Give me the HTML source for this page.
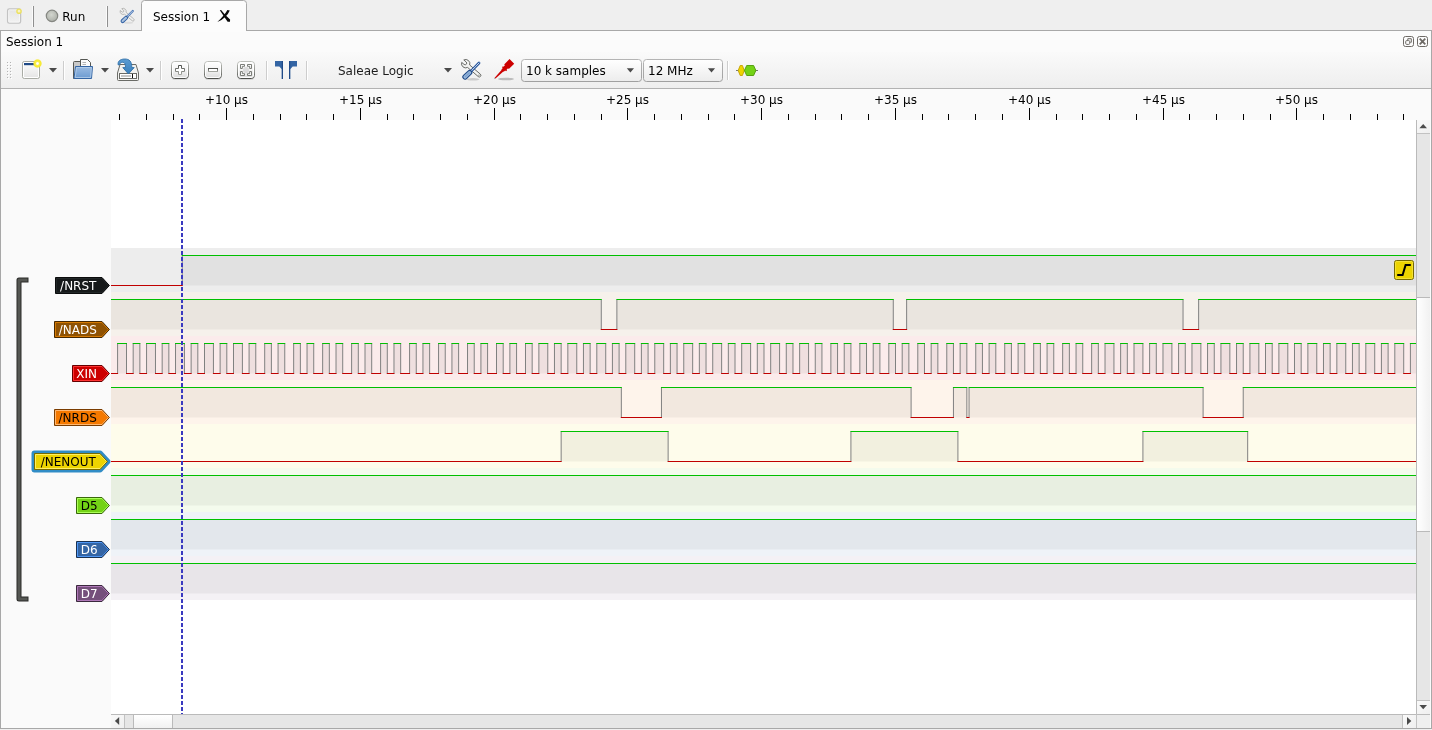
<!DOCTYPE html>
<html>
<head>
<meta charset="utf-8">
<title>Session 1</title>
<style>
html,body{margin:0;padding:0;background:#efefef;overflow:hidden}
body{width:1432px;height:730px;position:relative}
svg{position:absolute;left:0;top:0;display:block;will-change:transform}
text{font-family:"DejaVu Sans","Liberation Sans",sans-serif;font-size:12px}
</style>
</head>
<body>
<svg width="1432" height="730" viewBox="0 0 1432 730">
<defs>
<linearGradient id="tbg" x1="0" y1="0" x2="0" y2="1"><stop offset="0" stop-color="#fafafa"/><stop offset="1" stop-color="#eeeeee"/></linearGradient>
<linearGradient id="btn" x1="0" y1="0" x2="0" y2="1"><stop offset="0" stop-color="#ffffff"/><stop offset="1" stop-color="#ececec"/></linearGradient>
<linearGradient id="hnd" x1="0" y1="0" x2="0" y2="1"><stop offset="0" stop-color="#ffffff"/><stop offset="1" stop-color="#f1f1f1"/></linearGradient>
<linearGradient id="hndv" x1="0" y1="0" x2="1" y2="0"><stop offset="0" stop-color="#ffffff"/><stop offset="1" stop-color="#f1f1f1"/></linearGradient>
<linearGradient id="fold" x1="0" y1="0" x2="0" y2="1"><stop offset="0" stop-color="#9cbce2"/><stop offset="1" stop-color="#6b9ad1"/></linearGradient>
<linearGradient id="winic" x1="0" y1="0" x2="0" y2="1"><stop offset="0" stop-color="#fdfdfd"/><stop offset="1" stop-color="#e6e6e6"/></linearGradient>
<radialGradient id="glow"><stop offset="0" stop-color="#ffffff"/><stop offset="0.18" stop-color="#ffffff"/><stop offset="0.4" stop-color="#fbf04a"/><stop offset="0.75" stop-color="#f6e92f"/><stop offset="1" stop-color="#f6e92f" stop-opacity="0"/></radialGradient>
<radialGradient id="runb" cx="0.45" cy="0.4" r="0.6"><stop offset="0" stop-color="#d3d6cf"/><stop offset="1" stop-color="#acafa8"/></radialGradient>
<g id="tools22">
<ellipse cx="13" cy="20.300" rx="6.500" ry="1.300" fill="#000" fill-opacity="0.160"/>
<g transform="translate(5.700,4.700) rotate(40.600)"><path d="M3.880 -1.600L17.900 -1.600A1.600 1.600 0 0 1 17.900 1.600L3.880 1.600A4.200 4.200 0 0 1 -3.880 1.600L-0.800 1.600A1.600 1.600 0 0 0 -0.800 -1.600L-3.880 -1.600A4.200 4.200 0 0 1 3.880 -1.600Z" fill="#f3f3f1" stroke="#5d5f5b" stroke-width="0.850" stroke-linejoin="round"/><circle cx="17.500" cy="0" r="0.600" fill="#5d5f5b"/></g>
<path d="M10.300 12.900L19 4" stroke="#2c5aa0" stroke-width="2.800" stroke-linecap="round"/>
<path d="M10.800 12.400L19 4" stroke="#e8eef7" stroke-width="0.900" stroke-linecap="round" stroke-dasharray="1.100 0.700"/>
<path d="M5 18L9.600 13.600" stroke="#204a87" stroke-width="5.400" stroke-linecap="round"/>
<path d="M5 18L9.600 13.600" stroke="#9dbce0" stroke-width="3.200" stroke-linecap="round"/>
<path d="M5.200 17.800L9.400 13.800" stroke="#7a9fcd" stroke-width="1.200" stroke-linecap="round"/>
</g>
<g id="tools16">
<ellipse cx="13" cy="20.300" rx="6.500" ry="1.300" fill="#000" fill-opacity="0.080"/>
<g transform="translate(5.700,4.700) rotate(40.600)"><path d="M3.880 -1.600L17.900 -1.600A1.600 1.600 0 0 1 17.900 1.600L3.880 1.600A4.200 4.200 0 0 1 -3.880 1.600L-0.800 1.600A1.600 1.600 0 0 0 -0.800 -1.600L-3.880 -1.600A4.200 4.200 0 0 1 3.880 -1.600Z" fill="#f1f1f1" stroke="#a9aaa7" stroke-width="1" stroke-linejoin="round"/></g>
<path d="M10.300 12.900L19 4" stroke="#4d79b8" stroke-width="3" stroke-linecap="round"/>
<path d="M10.800 12.400L19 4" stroke="#dfe8f4" stroke-width="1" stroke-linecap="round" stroke-dasharray="1.100 0.900"/>
<path d="M5 18L9.600 13.600" stroke="#2f5fa3" stroke-width="5.600" stroke-linecap="round"/>
<path d="M5 18L9.600 13.600" stroke="#a9c1de" stroke-width="3" stroke-linecap="round"/>
</g>
<linearGradient id="sbb" x1="0" y1="0" x2="1" y2="1"><stop offset="0" stop-color="#f9f9f9"/><stop offset="1" stop-color="#efefef"/></linearGradient>
<linearGradient id="sarr" x1="0" y1="0" x2="0" y2="1"><stop offset="0" stop-color="#5a9bd2"/><stop offset="1" stop-color="#3a80bd"/></linearGradient>
<linearGradient id="nsi" x1="0" y1="0" x2="0" y2="1"><stop offset="0" stop-color="#e4e4e4"/><stop offset="1" stop-color="#f2f2f2"/></linearGradient>
<path id="darr2" d="M0 0h7.200l-3.600 4.200z" fill="#4a4a4a"/>
<path id="darr" d="M0 0h8l-4 4.5z" fill="#4a4a4a"/>
</defs>

<!-- ===== window background / tab bar ===== -->
<rect x="0" y="0" width="1432" height="730" fill="#efefef"/>
<!-- frame -->
<rect x="0.5" y="30.5" width="1431" height="698" fill="#fbfbfb" stroke="#a8a8a8"/>
<!-- selected tab -->
<path d="M141.5 31V3.5Q141.5 0.5 144.5 0.5H243.500Q246.500 0.500 246.500 3.500V31" fill="#fcfcfc" stroke="#a8a8a8"/>
<rect x="142" y="30" width="104" height="2" fill="#fcfcfc"/>
<text x="153" y="21">Session 1</text>
<!-- tab close X -->
<path d="M219.800 10.300L221.100 10.100Q225.500 15.800 230.100 19.600L230 21.700L227.600 21.700Q224.200 17 219.800 10.300Z" fill="#0a0a0a"/><path d="M227.400 9.900L229.800 10.500Q228.600 13.600 225.200 17.100Q221.700 20.600 217.300 22.100Q221 18.600 223.500 15.500Q226 12.500 227.400 9.900Z" fill="#0a0a0a"/>

<!-- new session (disabled look) icon in tab bar -->
<rect x="7.600" y="8.800" width="13" height="14.300" rx="1.600" fill="url(#nsi)" stroke="#c3c3c3" stroke-width="1.300"/>
<rect x="8.700" y="9.900" width="10.800" height="12.100" rx="0.800" fill="none" stroke="#f6f6f6" stroke-width="0.900"/>
<circle cx="19" cy="11.200" r="2.100" fill="#f7f3c4" stroke="#ede160" stroke-width="1.400"/>
<!-- separators -->
<path d="M33.500 6V27M107.500 6V27" stroke="#8f8f8f"/>
<path d="M32.500 6V27M106.500 6V27" stroke="#fbfbfb"/>
<!-- Run -->
<circle cx="52" cy="15.900" r="5.700" fill="url(#runb)" stroke="#858782" stroke-width="1.200"/>
<text x="62.300" y="21">Run</text>
<!-- settings (tools) icon -->
<use href="#tools16" transform="translate(119,8) scale(0.727)"/>

<!-- ===== dock title ===== -->
<text x="6" y="46">Session 1</text>
<rect x="1403.500" y="36.500" width="10" height="10" rx="2" fill="none" stroke="#6e6a66"/>
<path d="M1407.800 40.200V38.700H1411.300V42.300H1410.200" fill="none" stroke="#6e6a66" stroke-linejoin="round"/>
<rect x="1405.700" y="40.600" width="4" height="3.800" rx="1" fill="none" stroke="#6e6a66"/>
<rect x="1417.500" y="36.500" width="10" height="10" rx="2" fill="none" stroke="#6e6a66"/>
<path d="M1419.700 38.700L1425.300 44.300M1425.300 38.700L1419.700 44.300" stroke="#6e6a66" stroke-width="1.800"/>

<!-- ===== toolbar ===== -->
<rect x="1" y="52" width="1430" height="36" fill="url(#tbg)"/>
<path d="M1 88.500H1431" stroke="#b2b2b2"/>
<!-- grip -->
<g fill="#b4b4b4"><rect x="7" y="62" width="1" height="1"/><rect x="10" y="62" width="1" height="1"/><rect x="7" y="65" width="1" height="1"/><rect x="10" y="65" width="1" height="1"/><rect x="7" y="68" width="1" height="1"/><rect x="10" y="68" width="1" height="1"/><rect x="7" y="71" width="1" height="1"/><rect x="10" y="71" width="1" height="1"/><rect x="7" y="74" width="1" height="1"/><rect x="10" y="74" width="1" height="1"/><rect x="7" y="77" width="1" height="1"/><rect x="10" y="77" width="1" height="1"/></g>
<g fill="#ffffff"><rect x="8" y="63" width="1" height="1"/><rect x="11" y="63" width="1" height="1"/><rect x="8" y="66" width="1" height="1"/><rect x="11" y="66" width="1" height="1"/><rect x="8" y="69" width="1" height="1"/><rect x="11" y="69" width="1" height="1"/><rect x="8" y="72" width="1" height="1"/><rect x="11" y="72" width="1" height="1"/><rect x="8" y="75" width="1" height="1"/><rect x="11" y="75" width="1" height="1"/><rect x="8" y="78" width="1" height="1"/><rect x="11" y="78" width="1" height="1"/></g>
<!-- new view icon -->
<rect x="22.500" y="61.500" width="17" height="17" rx="1.800" fill="#ffffff" stroke="#a9aca5"/>
<rect x="24" y="63" width="14" height="14" fill="url(#winic)"/>
<rect x="24" y="63" width="11" height="2.200" fill="#204a87"/>
<circle cx="37.500" cy="63.500" r="4.700" fill="url(#glow)"/>
<use href="#darr" x="49" y="68"/>
<!-- separators -->
<path d="M63.500 61V80M160.500 61V80M266.500 61V80M306.500 61V80M727.500 61V80" stroke="#cdcdcd"/>
<path d="M64.500 61V80M161.500 61V80M267.500 61V80M307.500 61V80M728.500 61V80" stroke="#ffffff"/>
<!-- open icon -->
<path d="M73.500 78.500V62.500Q73.500 61.500 74.500 61.500H80.500V78.500z" fill="#c9c9c9" stroke="#555753"/>
<path d="M80.500 67V59.500H87.500L90.500 62.500V67z" fill="#fbfbfb" stroke="#555753"/>
<path d="M82.500 62.500H86M82.500 64.500H86" stroke="#b5b5b5"/>
<path d="M75.500 66.500H92.500L91.500 78.500H74z" fill="url(#fold)" stroke="#3465a4"/>
<path d="M76.500 67.500H91.400L90.600 77.500H75.200z" fill="none" stroke="#b7cfea" stroke-opacity="0.800"/>
<use href="#darr" x="101" y="68"/>
<!-- save icon -->
<path d="M120 64.500H136L138.500 73V79.500Q138.500 80.500 137.500 80.500H118.500Q117.500 80.500 117.500 79.500V73z" fill="#f2f2f0" stroke="#6a6b66"/>
<rect x="119.500" y="73.500" width="17" height="5" fill="#ffffff" stroke="#6a6b66"/>
<rect x="121" y="75" width="10" height="2" fill="#c6c6c6"/>
<path d="M132.500 74V78" stroke="#111"/>
<path d="M118.200 64.900C117.500 61.500 119.800 59.200 124.500 59C129.600 58.900 131.800 61.600 131.800 67.600H134.200L128.400 73.900L122.800 67.600H125.500C125.600 64 124.500 62.300 122.600 62.300C120.900 62.300 119.800 63.300 119.400 64.900Z" fill="url(#sarr)" stroke="#2f6fa8" stroke-width="0.900" stroke-linejoin="round"/>
<use href="#darr" x="146" y="68"/>
<!-- zoom in / out / fit -->
<linearGradient id="zb" x1="0" y1="0" x2="0" y2="1"><stop offset="0" stop-color="#bcbeb9"/><stop offset="0.6" stop-color="#8c8e89"/><stop offset="1" stop-color="#4c4e4a"/></linearGradient><linearGradient id="zf" x1="0" y1="0" x2="0" y2="1"><stop offset="0" stop-color="#ffffff"/><stop offset="0.5" stop-color="#f4f4f4"/><stop offset="1" stop-color="#d9d9d9"/></linearGradient>
<linearGradient id="zi" x1="0" y1="0" x2="0" y2="1"><stop offset="0" stop-color="#50524e"/><stop offset="1" stop-color="#a3a59f"/></linearGradient>
<g id="zbtn"><rect x="172.500" y="77.500" width="15" height="2.500" rx="1.200" fill="#000" fill-opacity="0.100"/><rect x="171.500" y="61.500" width="17" height="17" rx="3.200" fill="url(#zf)" stroke="url(#zb)"/><rect x="172.500" y="62.500" width="15" height="15" rx="2.400" fill="none" stroke="#ffffff" stroke-opacity="0.900"/></g>
<use href="#zbtn" x="33"/><use href="#zbtn" x="66"/>
<path d="M178.500 65.500h3v3h3v3h-3v3h-3v-3h-3v-3h3z" fill="#ffffff" stroke="url(#zi)"/>
<rect x="208.500" y="68.500" width="9" height="3" fill="#ffffff" stroke="url(#zi)"/>
<circle cx="246" cy="70" r="3" fill="#d0d0d0" fill-opacity="0.700"/>
<g fill="#ffffff" stroke="#6d6f6a" stroke-width="0.900"><path d="M240.500 68.500v-4h4v1.800h-2.200v2.200z"/><path d="M251.500 68.500v-4h-4v1.800h2.200v2.200z"/><path d="M240.500 71.500v4h4v-1.800h-2.200v-2.200z"/><path d="M251.500 71.500v4h-4v-1.800h2.200v-2.200z"/></g>
<!-- cursors -->
<path d="M275 61H283V79H281.800V69.200L279.300 66.600H275z" fill="#3465a4"/><path d="M282.400 61V79" stroke="#204a87" stroke-width="1.200"/>
<path d="M297 61H289V79H290.200V69.200L292.700 66.600H297z" fill="#3465a4"/><path d="M289.600 61V79" stroke="#204a87" stroke-width="1.200"/>
<!-- device -->
<text x="338" y="75" fill="#1c1c1c">Saleae Logic</text>
<use href="#darr" x="444" y="68"/>
<!-- tools 22px -->
<use href="#tools22" transform="translate(460,59)"/>
<!-- probe -->
<ellipse cx="506" cy="79" rx="8" ry="1.300" fill="#000" fill-opacity="0.220"/>
<path d="M493.830 79.370L495.600 78.310L494.890 77.600z" fill="#8a8a8a"/>
<path d="M495.500 78.480L503.340 71.480L503.730 71.870L505.220 70.390L506.070 71.230L507.060 70.240L506.560 69.750L508.050 68.260L508.820 69.040L514.200 63.670L509.530 59L504.160 64.380L504.940 65.150L503.450 66.640L502.960 66.140L501.970 67.130L502.810 67.980L501.330 69.470L501.720 69.860L494.720 77.700z" fill="#cc0000"/>
<!-- combos -->
<linearGradient id="cbs" x1="0" y1="0" x2="0" y2="1"><stop offset="0" stop-color="#b4b4b4"/><stop offset="1" stop-color="#a0a0a0"/></linearGradient>
<rect x="521.500" y="59.500" width="120" height="22" rx="3" fill="url(#btn)" stroke="url(#cbs)"/>
<text x="526" y="75">10 k samples</text>
<use href="#darr2" x="626.800" y="68.300"/>
<rect x="643.500" y="59.500" width="79" height="22" rx="3" fill="url(#btn)" stroke="url(#cbs)"/>
<text x="648" y="75">12 MHz</text>
<use href="#darr2" x="707.900" y="68.300"/>
<!-- decoder icon -->
<path d="M736 70.500H758" stroke="#777" stroke-width="1"/>
<path d="M738.200 70.500L740.200 65.500H742.400L744.300 70.500L742.400 75.500H740.200z" fill="#edd400" stroke="#c4a000" stroke-width="0.900"/>
<path d="M744.400 70.500L746.700 65.500H753.600L755.900 70.500L753.600 75.500H746.700z" fill="#73d216" stroke="#4e9a06" stroke-width="0.900"/>


<!-- ===== ruler / header / view ===== -->
<rect x="1" y="89" width="1430" height="31" fill="#fafafa"/>
<rect x="1" y="120" width="110" height="608" fill="#fafafa"/>
<rect x="111" y="120" width="1305" height="594" fill="#ffffff"/>
<path d="M226.5 108V120M360.5 108V120M494.5 108V120M627.5 108V120M761.5 108V120M895.5 108V120M1029.5 108V120M1163.5 108V120M1296.5 108V120M119.5 114V120M146.5 114V120M173.5 114V120M199.5 114V120M253.5 114V120M280.5 114V120M306.5 114V120M333.5 114V120M387.5 114V120M413.5 114V120M440.5 114V120M467.5 114V120M520.5 114V120M547.5 114V120M574.5 114V120M601.5 114V120M654.5 114V120M681.5 114V120M708.5 114V120M734.5 114V120M788.5 114V120M815.5 114V120M841.5 114V120M868.5 114V120M922.5 114V120M948.5 114V120M975.5 114V120M1002.5 114V120M1056.5 114V120M1082.5 114V120M1109.5 114V120M1136.5 114V120M1189.5 114V120M1216.5 114V120M1243.5 114V120M1270.5 114V120M1323.5 114V120M1350.5 114V120M1377.5 114V120M1403.5 114V120" stroke="#000" fill="none" shape-rendering="crispEdges"/>
<text x="226.5" y="104" text-anchor="middle">+10 µs</text>
<text x="360.5" y="104" text-anchor="middle">+15 µs</text>
<text x="494.5" y="104" text-anchor="middle">+20 µs</text>
<text x="627.5" y="104" text-anchor="middle">+25 µs</text>
<text x="761.5" y="104" text-anchor="middle">+30 µs</text>
<text x="895.5" y="104" text-anchor="middle">+35 µs</text>
<text x="1029.5" y="104" text-anchor="middle">+40 µs</text>
<text x="1163.5" y="104" text-anchor="middle">+45 µs</text>
<text x="1296.5" y="104" text-anchor="middle">+50 µs</text>
<clipPath id="vw"><rect x="111" y="120" width="1305" height="594"/></clipPath>
<g clip-path="url(#vw)">
<rect x="111" y="248" width="1305" height="44" fill="#ededed"/>
<rect x="111" y="292" width="1305" height="44" fill="#f6f1eb"/>
<rect x="111" y="336" width="1305" height="44" fill="#fbebeb"/>
<rect x="111" y="380" width="1305" height="44" fill="#fef4eb"/>
<rect x="111" y="424" width="1305" height="44" fill="#fefceb"/>
<rect x="111" y="468" width="1305" height="44" fill="#f4fbed"/>
<rect x="111" y="512" width="1305" height="44" fill="#eff3f8"/>
<rect x="111" y="556" width="1305" height="44" fill="#f4f1f5"/>
<path d="M182.22 255.5H1416V285.5H182.22z" fill="#000" fill-opacity="0.047"/>
<path d="M182.22 255.5V285.5" stroke="#808080" fill="none"/>
<path d="M182.22 255.5H1416" stroke="#00c000" fill="none" stroke-linecap="square"/>
<path d="M111 285.5H182.22" stroke="#c00000" fill="none" stroke-linecap="square"/>
<path d="M111 299.5H601.27V329.5H111zM616.88 299.5H893.27V329.5H616.88zM906.64 299.5H1183.04V329.5H906.64zM1198.64 299.5H1416V329.5H1198.64z" fill="#000" fill-opacity="0.047"/>
<path d="M601.27 299.5V329.5M616.88 299.5V329.5M893.27 299.5V329.5M906.64 299.5V329.5M1183.04 299.5V329.5M1198.64 299.5V329.5" stroke="#808080" fill="none"/>
<path d="M111 299.5H601.27M616.88 299.5H893.27M906.64 299.5H1183.04M1198.64 299.5H1416" stroke="#00c000" fill="none" stroke-linecap="square"/>
<path d="M601.27 329.5H616.88M893.27 329.5H906.64M1183.04 329.5H1198.64" stroke="#c00000" fill="none" stroke-linecap="square"/>
<path d="M117.58 343.5H126.5V373.5H117.58zM133.18 343.5H139.87V373.5H133.18zM146.56 343.5H155.47V373.5H146.56zM162.16 343.5H168.85V373.5H162.16zM175.53 343.5H184.45V373.5H175.53zM191.14 343.5H197.82V373.5H191.14zM204.51 343.5H213.43V373.5H204.51zM220.11 343.5H226.8V373.5H220.11zM233.49 343.5H242.4V373.5H233.49zM249.09 343.5H255.78V373.5H249.09zM264.69 343.5H271.38V373.5H264.69zM278.07 343.5H284.75V373.5H278.07zM293.67 343.5H300.36V373.5H293.67zM307.04 343.5H313.73V373.5H307.04zM322.65 343.5H329.33V373.5H322.65zM336.02 343.5H342.71V373.5H336.02zM351.62 343.5H358.31V373.5H351.62zM365 343.5H371.69V373.5H365zM380.6 343.5H387.29V373.5H380.6zM393.98 343.5H400.66V373.5H393.98zM409.58 343.5H416.26V373.5H409.58zM422.95 343.5H429.64V373.5H422.95zM438.56 343.5H445.24V373.5H438.56zM451.93 343.5H458.62V373.5H451.93zM467.53 343.5H474.22V373.5H467.53zM480.91 343.5H487.59V373.5H480.91zM496.51 343.5H503.2V373.5H496.51zM509.88 343.5H516.57V373.5H509.88zM525.49 343.5H532.17V373.5H525.49zM538.86 343.5H547.78V373.5H538.86zM554.46 343.5H561.15V373.5H554.46zM567.84 343.5H576.75V373.5H567.84zM583.44 343.5H590.13V373.5H583.44zM596.81 343.5H605.73V373.5H596.81zM612.42 343.5H619.1V373.5H612.42zM625.79 343.5H634.71V373.5H625.79zM641.39 343.5H648.08V373.5H641.39zM654.77 343.5H663.68V373.5H654.77zM670.37 343.5H677.06V373.5H670.37zM683.75 343.5H692.66V373.5H683.75zM699.35 343.5H706.04V373.5H699.35zM712.72 343.5H721.64V373.5H712.72zM728.33 343.5H735.01V373.5H728.33zM741.7 343.5H750.62V373.5H741.7zM757.3 343.5H763.99V373.5H757.3zM770.68 343.5H779.59V373.5H770.68zM786.28 343.5H792.97V373.5H786.28zM799.65 343.5H808.57V373.5H799.65zM815.26 343.5H821.94V373.5H815.26zM830.86 343.5H837.55V373.5H830.86zM844.23 343.5H850.92V373.5H844.23zM859.84 343.5H866.52V373.5H859.84zM873.21 343.5H879.9V373.5H873.21zM888.81 343.5H895.5V373.5H888.81zM902.19 343.5H908.87V373.5H902.19zM917.79 343.5H924.48V373.5H917.79zM931.16 343.5H937.85V373.5H931.16zM946.77 343.5H953.45V373.5H946.77zM960.14 343.5H966.83V373.5H960.14zM975.74 343.5H982.43V373.5H975.74zM989.12 343.5H995.81V373.5H989.12zM1004.72 343.5H1011.41V373.5H1004.72zM1018.1 343.5H1024.78V373.5H1018.1zM1033.7 343.5H1040.38V373.5H1033.7zM1047.07 343.5H1053.76V373.5H1047.07zM1062.67 343.5H1069.36V373.5H1062.67zM1076.05 343.5H1082.74V373.5H1076.05zM1091.65 343.5H1098.34V373.5H1091.65zM1105.03 343.5H1113.94V373.5H1105.03zM1120.63 343.5H1127.32V373.5H1120.63zM1134 343.5H1142.92V373.5H1134zM1149.61 343.5H1156.29V373.5H1149.61zM1162.98 343.5H1171.9V373.5H1162.98zM1178.58 343.5H1185.27V373.5H1178.58zM1191.96 343.5H1200.87V373.5H1191.96zM1207.56 343.5H1214.25V373.5H1207.56zM1220.93 343.5H1229.85V373.5H1220.93zM1236.54 343.5H1243.22V373.5H1236.54zM1249.91 343.5H1258.83V373.5H1249.91zM1265.51 343.5H1272.2V373.5H1265.51zM1278.89 343.5H1287.8V373.5H1278.89zM1294.49 343.5H1301.18V373.5H1294.49zM1307.87 343.5H1316.78V373.5H1307.87zM1323.47 343.5H1330.15V373.5H1323.47zM1336.84 343.5H1345.76V373.5H1336.84zM1352.44 343.5H1359.13V373.5H1352.44zM1365.82 343.5H1374.73V373.5H1365.82zM1381.42 343.5H1388.11V373.5H1381.42zM1394.8 343.5H1403.71V373.5H1394.8zM1410.4 343.5H1416V373.5H1410.4z" fill="#000" fill-opacity="0.047"/>
<path d="M117.58 343.5V373.5M126.5 343.5V373.5M133.18 343.5V373.5M139.87 343.5V373.5M146.56 343.5V373.5M155.47 343.5V373.5M162.16 343.5V373.5M168.85 343.5V373.5M175.53 343.5V373.5M184.45 343.5V373.5M191.14 343.5V373.5M197.82 343.5V373.5M204.51 343.5V373.5M213.43 343.5V373.5M220.11 343.5V373.5M226.8 343.5V373.5M233.49 343.5V373.5M242.4 343.5V373.5M249.09 343.5V373.5M255.78 343.5V373.5M264.69 343.5V373.5M271.38 343.5V373.5M278.07 343.5V373.5M284.75 343.5V373.5M293.67 343.5V373.5M300.36 343.5V373.5M307.04 343.5V373.5M313.73 343.5V373.5M322.65 343.5V373.5M329.33 343.5V373.5M336.02 343.5V373.5M342.71 343.5V373.5M351.62 343.5V373.5M358.31 343.5V373.5M365 343.5V373.5M371.69 343.5V373.5M380.6 343.5V373.5M387.29 343.5V373.5M393.98 343.5V373.5M400.66 343.5V373.5M409.58 343.5V373.5M416.26 343.5V373.5M422.95 343.5V373.5M429.64 343.5V373.5M438.56 343.5V373.5M445.24 343.5V373.5M451.93 343.5V373.5M458.62 343.5V373.5M467.53 343.5V373.5M474.22 343.5V373.5M480.91 343.5V373.5M487.59 343.5V373.5M496.51 343.5V373.5M503.2 343.5V373.5M509.88 343.5V373.5M516.57 343.5V373.5M525.49 343.5V373.5M532.17 343.5V373.5M538.86 343.5V373.5M547.78 343.5V373.5M554.46 343.5V373.5M561.15 343.5V373.5M567.84 343.5V373.5M576.75 343.5V373.5M583.44 343.5V373.5M590.13 343.5V373.5M596.81 343.5V373.5M605.73 343.5V373.5M612.42 343.5V373.5M619.1 343.5V373.5M625.79 343.5V373.5M634.71 343.5V373.5M641.39 343.5V373.5M648.08 343.5V373.5M654.77 343.5V373.5M663.68 343.5V373.5M670.37 343.5V373.5M677.06 343.5V373.5M683.75 343.5V373.5M692.66 343.5V373.5M699.35 343.5V373.5M706.04 343.5V373.5M712.72 343.5V373.5M721.64 343.5V373.5M728.33 343.5V373.5M735.01 343.5V373.5M741.7 343.5V373.5M750.62 343.5V373.5M757.3 343.5V373.5M763.99 343.5V373.5M770.68 343.5V373.5M779.59 343.5V373.5M786.28 343.5V373.5M792.97 343.5V373.5M799.65 343.5V373.5M808.57 343.5V373.5M815.26 343.5V373.5M821.94 343.5V373.5M830.86 343.5V373.5M837.55 343.5V373.5M844.23 343.5V373.5M850.92 343.5V373.5M859.84 343.5V373.5M866.52 343.5V373.5M873.21 343.5V373.5M879.9 343.5V373.5M888.81 343.5V373.5M895.5 343.5V373.5M902.19 343.5V373.5M908.87 343.5V373.5M917.79 343.5V373.5M924.48 343.5V373.5M931.16 343.5V373.5M937.85 343.5V373.5M946.77 343.5V373.5M953.45 343.5V373.5M960.14 343.5V373.5M966.83 343.5V373.5M975.74 343.5V373.5M982.43 343.5V373.5M989.12 343.5V373.5M995.81 343.5V373.5M1004.72 343.5V373.5M1011.41 343.5V373.5M1018.1 343.5V373.5M1024.78 343.5V373.5M1033.7 343.5V373.5M1040.38 343.5V373.5M1047.07 343.5V373.5M1053.76 343.5V373.5M1062.67 343.5V373.5M1069.36 343.5V373.5M1076.05 343.5V373.5M1082.74 343.5V373.5M1091.65 343.5V373.5M1098.34 343.5V373.5M1105.03 343.5V373.5M1113.94 343.5V373.5M1120.63 343.5V373.5M1127.32 343.5V373.5M1134 343.5V373.5M1142.92 343.5V373.5M1149.61 343.5V373.5M1156.29 343.5V373.5M1162.98 343.5V373.5M1171.9 343.5V373.5M1178.58 343.5V373.5M1185.27 343.5V373.5M1191.96 343.5V373.5M1200.87 343.5V373.5M1207.56 343.5V373.5M1214.25 343.5V373.5M1220.93 343.5V373.5M1229.85 343.5V373.5M1236.54 343.5V373.5M1243.22 343.5V373.5M1249.91 343.5V373.5M1258.83 343.5V373.5M1265.51 343.5V373.5M1272.2 343.5V373.5M1278.89 343.5V373.5M1287.8 343.5V373.5M1294.49 343.5V373.5M1301.18 343.5V373.5M1307.87 343.5V373.5M1316.78 343.5V373.5M1323.47 343.5V373.5M1330.15 343.5V373.5M1336.84 343.5V373.5M1345.76 343.5V373.5M1352.44 343.5V373.5M1359.13 343.5V373.5M1365.82 343.5V373.5M1374.73 343.5V373.5M1381.42 343.5V373.5M1388.11 343.5V373.5M1394.8 343.5V373.5M1403.71 343.5V373.5M1410.4 343.5V373.5" stroke="#808080" fill="none"/>
<path d="M117.58 343.5H126.5M133.18 343.5H139.87M146.56 343.5H155.47M162.16 343.5H168.85M175.53 343.5H184.45M191.14 343.5H197.82M204.51 343.5H213.43M220.11 343.5H226.8M233.49 343.5H242.4M249.09 343.5H255.78M264.69 343.5H271.38M278.07 343.5H284.75M293.67 343.5H300.36M307.04 343.5H313.73M322.65 343.5H329.33M336.02 343.5H342.71M351.62 343.5H358.31M365 343.5H371.69M380.6 343.5H387.29M393.98 343.5H400.66M409.58 343.5H416.26M422.95 343.5H429.64M438.56 343.5H445.24M451.93 343.5H458.62M467.53 343.5H474.22M480.91 343.5H487.59M496.51 343.5H503.2M509.88 343.5H516.57M525.49 343.5H532.17M538.86 343.5H547.78M554.46 343.5H561.15M567.84 343.5H576.75M583.44 343.5H590.13M596.81 343.5H605.73M612.42 343.5H619.1M625.79 343.5H634.71M641.39 343.5H648.08M654.77 343.5H663.68M670.37 343.5H677.06M683.75 343.5H692.66M699.35 343.5H706.04M712.72 343.5H721.64M728.33 343.5H735.01M741.7 343.5H750.62M757.3 343.5H763.99M770.68 343.5H779.59M786.28 343.5H792.97M799.65 343.5H808.57M815.26 343.5H821.94M830.86 343.5H837.55M844.23 343.5H850.92M859.84 343.5H866.52M873.21 343.5H879.9M888.81 343.5H895.5M902.19 343.5H908.87M917.79 343.5H924.48M931.16 343.5H937.85M946.77 343.5H953.45M960.14 343.5H966.83M975.74 343.5H982.43M989.12 343.5H995.81M1004.72 343.5H1011.41M1018.1 343.5H1024.78M1033.7 343.5H1040.38M1047.07 343.5H1053.76M1062.67 343.5H1069.36M1076.05 343.5H1082.74M1091.65 343.5H1098.34M1105.03 343.5H1113.94M1120.63 343.5H1127.32M1134 343.5H1142.92M1149.61 343.5H1156.29M1162.98 343.5H1171.9M1178.58 343.5H1185.27M1191.96 343.5H1200.87M1207.56 343.5H1214.25M1220.93 343.5H1229.85M1236.54 343.5H1243.22M1249.91 343.5H1258.83M1265.51 343.5H1272.2M1278.89 343.5H1287.8M1294.49 343.5H1301.18M1307.87 343.5H1316.78M1323.47 343.5H1330.15M1336.84 343.5H1345.76M1352.44 343.5H1359.13M1365.82 343.5H1374.73M1381.42 343.5H1388.11M1394.8 343.5H1403.71M1410.4 343.5H1416" stroke="#00c000" fill="none" stroke-linecap="square"/>
<path d="M111 373.5H117.58M126.5 373.5H133.18M139.87 373.5H146.56M155.47 373.5H162.16M168.85 373.5H175.53M184.45 373.5H191.14M197.82 373.5H204.51M213.43 373.5H220.11M226.8 373.5H233.49M242.4 373.5H249.09M255.78 373.5H264.69M271.38 373.5H278.07M284.75 373.5H293.67M300.36 373.5H307.04M313.73 373.5H322.65M329.33 373.5H336.02M342.71 373.5H351.62M358.31 373.5H365M371.69 373.5H380.6M387.29 373.5H393.98M400.66 373.5H409.58M416.26 373.5H422.95M429.64 373.5H438.56M445.24 373.5H451.93M458.62 373.5H467.53M474.22 373.5H480.91M487.59 373.5H496.51M503.2 373.5H509.88M516.57 373.5H525.49M532.17 373.5H538.86M547.78 373.5H554.46M561.15 373.5H567.84M576.75 373.5H583.44M590.13 373.5H596.81M605.73 373.5H612.42M619.1 373.5H625.79M634.71 373.5H641.39M648.08 373.5H654.77M663.68 373.5H670.37M677.06 373.5H683.75M692.66 373.5H699.35M706.04 373.5H712.72M721.64 373.5H728.33M735.01 373.5H741.7M750.62 373.5H757.3M763.99 373.5H770.68M779.59 373.5H786.28M792.97 373.5H799.65M808.57 373.5H815.26M821.94 373.5H830.86M837.55 373.5H844.23M850.92 373.5H859.84M866.52 373.5H873.21M879.9 373.5H888.81M895.5 373.5H902.19M908.87 373.5H917.79M924.48 373.5H931.16M937.85 373.5H946.77M953.45 373.5H960.14M966.83 373.5H975.74M982.43 373.5H989.12M995.81 373.5H1004.72M1011.41 373.5H1018.1M1024.78 373.5H1033.7M1040.38 373.5H1047.07M1053.76 373.5H1062.67M1069.36 373.5H1076.05M1082.74 373.5H1091.65M1098.34 373.5H1105.03M1113.94 373.5H1120.63M1127.32 373.5H1134M1142.92 373.5H1149.61M1156.29 373.5H1162.98M1171.9 373.5H1178.58M1185.27 373.5H1191.96M1200.87 373.5H1207.56M1214.25 373.5H1220.93M1229.85 373.5H1236.54M1243.22 373.5H1249.91M1258.83 373.5H1265.51M1272.2 373.5H1278.89M1287.8 373.5H1294.49M1301.18 373.5H1307.87M1316.78 373.5H1323.47M1330.15 373.5H1336.84M1345.76 373.5H1352.44M1359.13 373.5H1365.82M1374.73 373.5H1381.42M1388.11 373.5H1394.8M1403.71 373.5H1410.4" stroke="#c00000" fill="none" stroke-linecap="square"/>
<path d="M111 387.5H621.33V417.5H111zM661.46 387.5H911.1V417.5H661.46zM953.45 387.5H966.83V417.5H953.45zM969.06 387.5H1203.1V417.5H969.06zM1243.22 387.5H1416V417.5H1243.22z" fill="#000" fill-opacity="0.047"/>
<path d="M621.33 387.5V417.5M661.46 387.5V417.5M911.1 387.5V417.5M953.45 387.5V417.5M966.83 387.5V417.5M969.06 387.5V417.5M1203.1 387.5V417.5M1243.22 387.5V417.5" stroke="#808080" fill="none"/>
<path d="M111 387.5H621.33M661.46 387.5H911.1M953.45 387.5H966.83M969.06 387.5H1203.1M1243.22 387.5H1416" stroke="#00c000" fill="none" stroke-linecap="square"/>
<path d="M621.33 417.5H661.46M911.1 417.5H953.45M966.83 417.5H969.06M1203.1 417.5H1243.22" stroke="#c00000" fill="none" stroke-linecap="square"/>
<path d="M561.15 431.5H668.14V461.5H561.15zM850.92 431.5H957.91V461.5H850.92zM1142.92 431.5H1247.68V461.5H1142.92z" fill="#000" fill-opacity="0.047"/>
<path d="M561.15 431.5V461.5M668.14 431.5V461.5M850.92 431.5V461.5M957.91 431.5V461.5M1142.92 431.5V461.5M1247.68 431.5V461.5" stroke="#808080" fill="none"/>
<path d="M561.15 431.5H668.14M850.92 431.5H957.91M1142.92 431.5H1247.68" stroke="#00c000" fill="none" stroke-linecap="square"/>
<path d="M111 461.5H561.15M668.14 461.5H850.92M957.91 461.5H1142.92M1247.68 461.5H1416" stroke="#c00000" fill="none" stroke-linecap="square"/>
<path d="M111 475.5H1416V505.5H111z" fill="#000" fill-opacity="0.047"/>
<path d="M111 475.5H1416" stroke="#00c000" fill="none" stroke-linecap="square"/>
<path d="M111 519.5H1416V549.5H111z" fill="#000" fill-opacity="0.047"/>
<path d="M111 519.5H1416" stroke="#00c000" fill="none" stroke-linecap="square"/>
<path d="M111 563.5H1416V593.5H111z" fill="#000" fill-opacity="0.047"/>
<path d="M111 563.5H1416" stroke="#00c000" fill="none" stroke-linecap="square"/>
</g>
<path d="M182 119V714" stroke="#3a3ac0" stroke-width="2" stroke-dasharray="4 2" fill="none"/>
<rect x="1394.500" y="260.500" width="19" height="19" rx="2" fill="#edd400" stroke="#766a00"/>
<rect x="1395.500" y="261.500" width="17" height="17" rx="1.200" fill="none" stroke="#f7e84a" stroke-opacity="0.700"/>
<path d="M1397.200 275H1402.600L1405.600 265H1410.800" fill="none" stroke="#000" stroke-width="2" stroke-linejoin="miter"/>
<polygon points="55.5,277.5 102,277.5 109.4,285.5 102,293.5 55.5,293.5" fill="#16191a"/>
<polygon points="56.5,278.5 102,278.5 108.4,285.5 102,292.5 56.5,292.5" fill="none" stroke="#212627"/>
<polygon points="55.5,277.5 102,277.5 109.4,285.5 102,293.5 55.5,293.5" fill="none" stroke="#0b0c0d"/>
<text x="78.25" y="289.9" text-anchor="middle" fill="#fff">/NRST</text>
<polygon points="54.5,321.5 102,321.5 109.4,329.5 102,337.5 54.5,337.5" fill="#8f5202"/>
<polygon points="55.5,322.5 102,322.5 108.4,329.5 102,336.5 55.5,336.5" fill="none" stroke="#d67b03"/>
<polygon points="54.5,321.5 102,321.5 109.4,329.5 102,337.5 54.5,337.5" fill="none" stroke="#472901"/>
<text x="77.85" y="333.9" text-anchor="middle" fill="#fff">/NADS</text>
<polygon points="72.5,365.5 102,365.5 109.4,373.5 102,381.5 72.5,381.5" fill="#cc0000"/>
<polygon points="73.5,366.5 102,366.5 108.4,373.5 102,380.5 73.5,380.5" fill="none" stroke="#ff3333"/>
<polygon points="72.5,365.5 102,365.5 109.4,373.5 102,381.5 72.5,381.5" fill="none" stroke="#660000"/>
<text x="86.65" y="377.9" text-anchor="middle" fill="#fff">XIN</text>
<polygon points="54.5,409.5 102,409.5 109.4,417.5 102,425.5 54.5,425.5" fill="#f57900"/>
<polygon points="55.5,410.5 102,410.5 108.4,417.5 102,424.5 55.5,424.5" fill="none" stroke="#ffb770"/>
<polygon points="54.5,409.5 102,409.5 109.4,417.5 102,425.5 54.5,425.5" fill="none" stroke="#7a3c00"/>
<text x="77.65" y="421.9" text-anchor="middle" fill="#000">/NRDS</text>
<polygon points="34.5,453.5 100,453.5 107.4,461.5 100,469.5 34.5,469.5" fill="none" stroke="#308cc6" stroke-width="6" stroke-linejoin="round"/>
<polygon points="34.5,453.5 100,453.5 107.4,461.5 100,469.5 34.5,469.5" fill="#edd400"/>
<polygon points="35.5,454.5 100,454.5 106.4,461.5 100,468.5 35.5,468.5" fill="none" stroke="#ffef64"/>
<polygon points="34.5,453.5 100,453.5 107.4,461.5 100,469.5 34.5,469.5" fill="none" stroke="#766a00"/>
<text x="68.35" y="465.9" text-anchor="middle" fill="#000">/NENOUT</text>
<polygon points="76.5,497.5 102,497.5 109.4,505.5 102,513.5 76.5,513.5" fill="#73d216"/>
<polygon points="77.5,498.5 102,498.5 108.4,505.5 102,512.5 77.5,512.5" fill="none" stroke="#aaff57"/>
<polygon points="76.5,497.5 102,497.5 109.4,505.5 102,513.5 76.5,513.5" fill="none" stroke="#39690b"/>
<text x="89.25" y="509.9" text-anchor="middle" fill="#000">D5</text>
<polygon points="76.5,541.5 102,541.5 109.4,549.5 102,557.5 76.5,557.5" fill="#3465a4"/>
<polygon points="77.5,542.5 102,542.5 108.4,549.5 102,556.5 77.5,556.5" fill="none" stroke="#4e97f6"/>
<polygon points="76.5,541.5 102,541.5 109.4,549.5 102,557.5 76.5,557.5" fill="none" stroke="#1a3252"/>
<text x="89.25" y="553.9" text-anchor="middle" fill="#fff">D6</text>
<polygon points="76.5,585.5 102,585.5 109.4,593.5 102,601.5 76.5,601.5" fill="#75507b"/>
<polygon points="77.5,586.5 102,586.5 108.4,593.5 102,600.5 77.5,600.5" fill="none" stroke="#af78b8"/>
<polygon points="76.5,585.5 102,585.5 109.4,593.5 102,601.5 76.5,601.5" fill="none" stroke="#3a283d"/>
<text x="89.25" y="597.9" text-anchor="middle" fill="#fff">D7</text>
<path d="M26 280H19V599H26" fill="none" stroke="#2a2b29" stroke-width="5" stroke-linecap="square" stroke-linejoin="round"/>
<path d="M26 280H19V599H26" fill="none" stroke="#555753" stroke-width="3" stroke-linecap="square" stroke-linejoin="round"/>
<!-- vertical scrollbar -->
<rect x="1416" y="120" width="14" height="594" fill="#e6e6e6"/>
<rect x="1430" y="89" width="1" height="639" fill="#fbfbfb"/>
<path d="M1416.500 120V714" stroke="#bababa"/>
<rect x="1417" y="120" width="13" height="13" fill="url(#sbb)"/>
<path d="M1417 133.500H1430M1417 700.500H1430" stroke="#c2c2c2"/>
<rect x="1417" y="701" width="13" height="13" fill="url(#sbb)"/>
<path d="M1419.400 128.200L1423.200 123.900L1427 128.200z" fill="#4a4a4a"/>
<path d="M1419.400 705L1427 705L1423.200 709.300z" fill="#4a4a4a"/>
<rect x="1417" y="298" width="13" height="233" fill="url(#hndv)"/>
<path d="M1417 297.500H1430M1417 531.500H1430" stroke="#bababa"/>
<!-- horizontal scrollbar -->
<rect x="111" y="714" width="1305" height="14" fill="#e6e6e6"/>
<path d="M111 714.500H1430" stroke="#bababa"/>
<rect x="111" y="715" width="13" height="13" fill="url(#sbb)"/>
<rect x="1403" y="715" width="13" height="13" fill="url(#sbb)"/>
<path d="M124.500 715V728M1402.500 715V728M1416.500 714V728" stroke="#c2c2c2"/>
<path d="M119.200 717V725L114.900 721z" fill="#4a4a4a"/>
<path d="M1407 717V725L1411.300 721z" fill="#4a4a4a"/>
<rect x="134" y="715" width="38" height="13" fill="url(#hnd)"/>
<path d="M133.500 715V728M172.500 715V728" stroke="#bababa"/>
<rect x="1417" y="715" width="13" height="13" fill="#efefef"/>
</svg>
</body>
</html>
